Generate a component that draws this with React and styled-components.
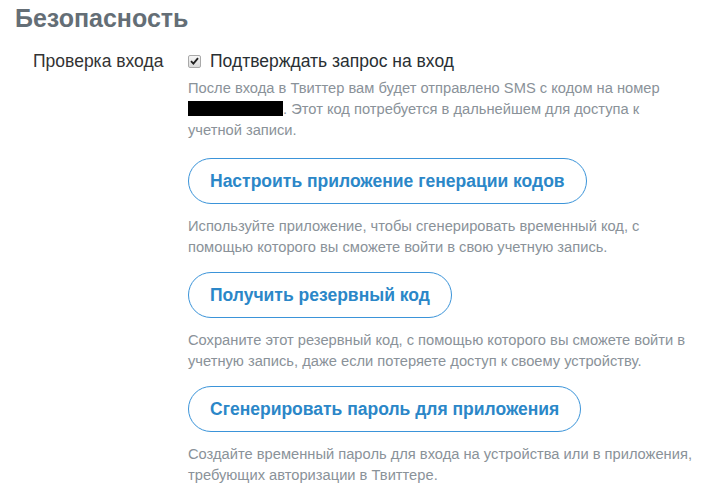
import React from "react";
import styled, { createGlobalStyle } from "styled-components";

const GlobalStyle = createGlobalStyle`
  body {
    margin: 0;
    background: #fff;
    font-family: "Liberation Sans", Arial, sans-serif;
  }
`;

const Page = styled.div`
  width: 728px;
  height: 497px;
  overflow: hidden;
  padding: 3px 0 0 15px;
  box-sizing: border-box;
`;

const Title = styled.h2`
  margin: 0;
  font-size: 25px;
  line-height: 30px;
  font-weight: bold;
  color: #646e76;
`;

const Row = styled.div`
  display: grid;
  grid-template-columns: 173px 508px;
  margin-top: 16px;
`;

const Label = styled.div`
  padding-left: 18px;
  font-size: 17.5px;
  line-height: 24px;
  color: #333;
  white-space: nowrap;
`;

const Controls = styled.div`
  display: flex;
  flex-direction: column;
  align-items: flex-start;
`;

const CheckRow = styled.label`
  display: flex;
  align-items: center;
  gap: 9px;
  font-size: 17.5px;
  line-height: 24px;
  color: #292f33;
`;

const Box = styled.span`
  width: 11px;
  height: 11px;
  border: 1px solid #a9a9a9;
  border-radius: 2px;
  background: linear-gradient(#f6f6f6, #dadada);
  display: flex;
  align-items: center;
  justify-content: center;
`;

const Desc = styled.p`
  margin: ${(p) => p.$before}px 0 ${(p) => p.$after}px;
  font-size: 14.7px;
  line-height: 21px;
  color: #8a9299;
`;

const Hidden = styled.span`
  display: inline-block;
  width: 95px;
  height: 15px;
  background: #000;
  vertical-align: -2px;
`;

const Button = styled.button`
  height: 46px;
  padding: 0 21px;
  border: 1px solid #3b94d9;
  border-radius: 100px;
  background: #fff;
  color: #2b87c8;
  font-family: "Liberation Sans", Arial, sans-serif;
  font-size: 17.5px;
  font-weight: bold;
  cursor: pointer;
`;

const actions = [
  {
    title: "Настроить приложение генерации кодов",
    text: "Используйте приложение, чтобы сгенерировать временный код, с помощью которого вы сможете войти в свою учетную запись.",
  },
  {
    title: "Получить резервный код",
    text: "Сохраните этот резервный код, с помощью которого вы сможете войти в учетную запись, даже если потеряете доступ к своему устройству.",
  },
  {
    title: "Сгенерировать пароль для приложения",
    text: "Создайте временный пароль для входа на устройства или в приложения, требующих авторизации в Твиттере.",
  },
];

const App = () => {
  return (
    <Page>
      <GlobalStyle />
      <Title>Безопасность</Title>
      <Row>
        <Label>Проверка входа</Label>
        <Controls>
          <CheckRow>
            <Box>
              <svg width="9" height="8" viewBox="0 0 9 8">
                <path d="M1 4.2 L3.4 6.6 L8 1.2" fill="none" stroke="#222" strokeWidth="1.8" />
              </svg>
            </Box>
            Подтверждать запрос на вход
          </CheckRow>
          <Desc $before={5} $after={17}>
            После входа в Твиттер вам будет отправлено SMS с кодом на номер <Hidden />. Этот код потребуется в дальнейшем для доступа к учетной записи.
          </Desc>
          {actions.map((a) => (
            <React.Fragment key={a.title}>
              <Button>{a.title}</Button>
              <Desc $before={12} $after={14}>{a.text}</Desc>
            </React.Fragment>
          ))}
        </Controls>
      </Row>
    </Page>
  );
};

export default App;
